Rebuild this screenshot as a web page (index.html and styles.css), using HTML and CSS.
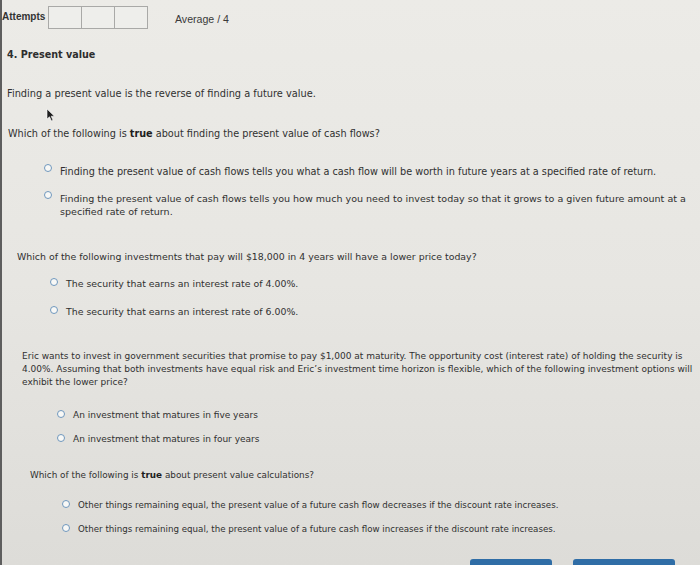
FILE: index.html
```html
<!DOCTYPE html>
<html lang="en">
<head>
<meta charset="utf-8">
<title>Present value</title>
<link rel="stylesheet" href="styles.css">
</head>
<body>
<div class="page">
  <div class="header">
    <span class="attempts">Attempts</span>
    <div class="boxes"><span class="cell"></span><span class="cell"></span><span class="cell"></span></div>
    <span class="average">Average / 4</span>
  </div>

  <h2 class="title">4. Present value</h2>
  <p class="intro">Finding a present value is the reverse of finding a future value.</p>

  <div class="cursor"><svg width="9" height="13" viewBox="0 0 9 13"><path d="M1 0 L1 10 L3.5 7.8 L5.5 12 L7 11.3 L5.2 7.2 L8.4 7.2 Z" fill="#1e1e1e" stroke="#fff" stroke-width="0.6"/></svg></div>

  <section class="q q1">
    <p class="stem">Which of the following is <b>true</b> about finding the present value of cash flows?</p>
    <label class="opt o1"><span class="radio"></span><span class="txt">Finding the present value of cash flows tells you what a cash flow will be worth in future years at a specified rate of return.</span></label>
    <label class="opt o2"><span class="radio"></span><span class="txt">Finding the present value of cash flows tells you how much you need to invest today so that it grows to a given future amount at a specified rate of return.</span></label>
  </section>

  <section class="q q2">
    <p class="stem">Which of the following investments that pay will $18,000 in 4 years will have a lower price today?</p>
    <label class="opt o1"><span class="radio"></span><span class="txt">The security that earns an interest rate of 4.00%.</span></label>
    <label class="opt o2"><span class="radio"></span><span class="txt">The security that earns an interest rate of 6.00%.</span></label>
  </section>

  <section class="q q3">
    <p class="stem">Eric wants to invest in government securities that promise to pay $1,000 at maturity. The opportunity cost (interest rate) of holding the security is 4.00%. Assuming that both investments have equal risk and Eric’s investment time horizon is flexible, which of the following investment options will exhibit the lower price?</p>
    <label class="opt o1"><span class="radio"></span><span class="txt">An investment that matures in five years</span></label>
    <label class="opt o2"><span class="radio"></span><span class="txt">An investment that matures in four years</span></label>
  </section>

  <section class="q q4">
    <p class="stem">Which of the following is <b>true</b> about present value calculations?</p>
    <label class="opt o1"><span class="radio"></span><span class="txt">Other things remaining equal, the present value of a future cash flow decreases if the discount rate increases.</span></label>
    <label class="opt o2"><span class="radio"></span><span class="txt">Other things remaining equal, the present value of a future cash flow increases if the discount rate increases.</span></label>
  </section>

  <div class="actions">
    <span class="btn b1"></span>
    <span class="btn b2"></span>
  </div>
</div>
</body>
</html>
```

FILE: styles.css
```css
html, body {
  margin: 0;
  padding: 0;
  height: 100%;
  overflow: hidden;
}
body {
  background: linear-gradient(180deg, #ecebe7 0%, #e7e6e2 50%, #dddcd8 100%);
  font-family: "DejaVu Sans", Verdana, sans-serif;
  color: #303030;
  font-size: 9px;
  line-height: 13px;
}
.page {
  position: relative;
  height: 565px;
  border-left: 2px solid #5e5e5e;
  box-sizing: border-box;
}
.header {
  display: flex;
  align-items: flex-start;
  padding-top: 6px;
  height: 23px;
}
.attempts {
  font-family: "Liberation Sans", Arial, sans-serif;
  font-weight: bold;
  font-size: 10px;
  color: #333;
  line-height: 13px;
  margin-top: 4px;
  width: 46px;
}
.boxes {
  display: flex;
  border: 1px solid #a9a9a7;
  background: #eeeeeb;
}
.cell {
  width: 32px;
  height: 21px;
  border-left: 1px solid #a9a9a7;
}
.cell:first-child { border-left: none; }
.average {
  font-family: "Liberation Sans", Arial, sans-serif;
  font-size: 10.6px;
  color: #3a3a3a;
  margin-left: 27px;
  margin-top: 7px;
}
.title {
  margin: 19px 0 0 5px;
  font-size: 9.6px;
  line-height: 13px;
  font-weight: bold;
  color: #2e2e2e;
}
.intro {
  margin: 26px 0 0 5px;
  font-size: 9.8px;
}
.cursor {
  position: absolute;
  left: 44px;
  top: 109px;
  line-height: 0;
}
.stem { margin: 0; }
.stem b { color: #1e1e1e; }
.q { display: flex; flex-direction: column; }
.opt {
  display: flex;
  align-items: flex-start;
}
.radio {
  flex: none;
  width: 6px;
  height: 6px;
  border: 1px solid #6f97bd;
  border-radius: 50%;
  background: #f8f8f6;
  margin-top: 1px;
  margin-right: 8px;
}
.q1 { margin: 27px 0 0 6px; font-size: 9.7px; }
.q1 .opt { padding-left: 36px; }
.q1 .o1 { margin-top: 25px; }
.q1 .o2 { margin-top: 14px; font-size: 9.55px; }
.q1 .radio { margin-top: -1px; }
.q1 .txt { width: 638px; }

.q2 { margin: 32px 0 0 15px; font-size: 9.4px; }
.q2 .opt { padding-left: 33px; }
.q2 .o1 { margin-top: 14px; }
.q2 .o2 { margin-top: 15px; }

.q3 { margin: 32px 0 0 20px; font-size: 9px; }
.q3 .stem { width: 680px; }
.q3 .opt { padding-left: 35px; }
.q3 .o1 { margin-top: 20px; }
.q3 .o2 { margin-top: 11px; }

.q4 { margin: 23px 0 0 28px; font-size: 8.7px; }
.q4 .stem { font-size: 8.85px; }
.q4 .opt { padding-left: 32px; }
.q4 .o1 { margin-top: 17px; }
.q4 .o2 { margin-top: 11px; }

.actions {
  display: flex;
  margin-top: 23px;
  padding-left: 468px;
  gap: 21px;
}
.btn {
  height: 12px;
  background: #2f6da6;
  border-radius: 3px 3px 0 0;
}
.b1 { width: 82px; }
.b2 { width: 102px; }
```
